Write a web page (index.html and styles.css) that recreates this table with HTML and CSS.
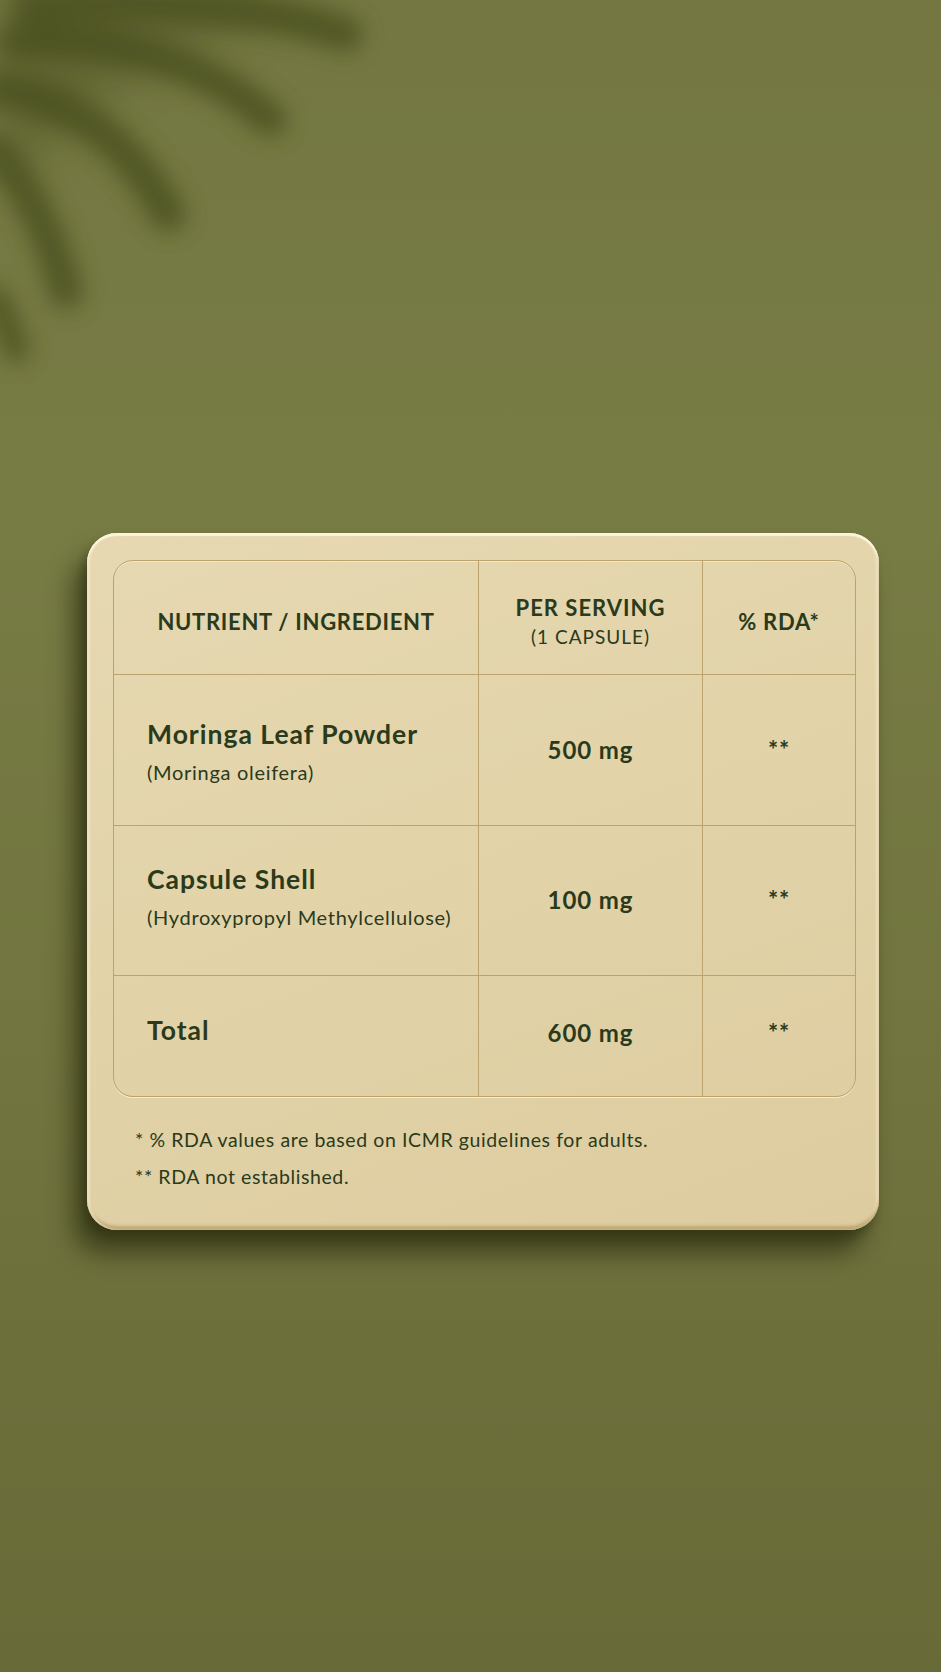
FILE: index.html
```html
<!DOCTYPE html>
<html lang="en">
<head>
<meta charset="utf-8">
<title>Moringa Supplement Facts</title>
<link rel="stylesheet" href="styles.css">
</head>
<body>
<div class="scene">
  <svg class="leaf-shadow" width="600" height="460" viewBox="0 0 600 460" aria-hidden="true">
    <defs>
      <filter id="blur" x="-30%" y="-30%" width="160%" height="160%">
        <feGaussianBlur stdDeviation="11"/>
      </filter>
      <filter id="blurwide" x="-30%" y="-30%" width="160%" height="160%">
        <feGaussianBlur stdDeviation="24"/>
      </filter>
    </defs>
    <g filter="url(#blurwide)" opacity="0.4">
      <path d="M0 0 H300 C220 40 120 60 40 150 C20 170 0 180 0 180 Z" fill="#454b1c"/>
    </g>
    <g filter="url(#blur)" fill="none" stroke="#4a4f1f" stroke-linecap="round" opacity="0.8">
      <path d="M30 6 C140 0 260 4 345 34" stroke-width="36"/>
      <path d="M15 42 C90 36 195 52 270 120" stroke-width="34"/>
      <path d="M-5 88 C60 98 122 130 168 214" stroke-width="36"/>
      <path d="M-5 150 C25 184 50 232 66 292" stroke-width="34"/>
      <path d="M-5 298 C5 318 12 336 16 350" stroke-width="26"/>
    </g>
  </svg>

  <div class="card">
    <div class="facts">
      <div class="cell head">NUTRIENT / INGREDIENT</div>
      <div class="cell head stacked">
        <span class="head-main">PER SERVING</span>
        <span class="head-sub">(1 CAPSULE)</span>
      </div>
      <div class="cell head last-col">% RDA*</div>

      <div class="cell name row-1">
        <span class="name-main">Moringa Leaf Powder</span>
        <span class="name-sub">(Moringa oleifera)</span>
      </div>
      <div class="cell value row-1">500 mg</div>
      <div class="cell value rda row-1 last-col">**</div>

      <div class="cell name row-2">
        <span class="name-main">Capsule Shell</span>
        <span class="name-sub">(Hydroxypropyl Methylcellulose)</span>
      </div>
      <div class="cell value row-2">100 mg</div>
      <div class="cell value rda row-2 last-col">**</div>

      <div class="cell name row-3 last-row">
        <span class="name-main">Total</span>
      </div>
      <div class="cell value row-3 last-row">600 mg</div>
      <div class="cell value rda row-3 last-col last-row">**</div>
    </div>

    <div class="notes">
      <p>* % RDA values are based on ICMR guidelines for adults.</p>
      <p>** RDA not established.</p>
    </div>
  </div>
</div>
</body>
</html>
```

FILE: styles.css
```css
* {
  box-sizing: border-box;
}

html, body {
  margin: 0;
  padding: 0;
}

body {
  width: 941px;
  height: 1672px;
  overflow: hidden;
  font-family: "Lato", "Noto Sans", sans-serif;
  color: #2a3a1b;
  background: linear-gradient(180deg, #747742 0%, #777b44 30%, #72753f 60%, #686a37 100%);
}

.scene {
  position: relative;
  width: 941px;
  height: 1672px;
  padding-top: 533px;
  padding-left: 87px;
}

.leaf-shadow {
  position: absolute;
  left: 0;
  top: 0;
  pointer-events: none;
}

.card {
  position: relative;
  width: 792px;
  height: 697px;
  padding: 27px 23px 0 26px;
  border-radius: 30px;
  background: linear-gradient(160deg, #e6d8b1 0%, #e2d3a9 45%, #ddcc9f 100%);
  box-shadow:
    inset 0 3px 1px rgba(255, 248, 225, 0.85),
    inset 3px 0 2px rgba(255, 248, 225, 0.5),
    inset 0 -4px 3px rgba(160, 130, 70, 0.5),
    inset -3px 0 2px rgba(255, 248, 225, 0.45),
    -14px 24px 24px rgba(35, 37, 10, 0.6),
    -4px 8px 8px rgba(35, 37, 10, 0.35);
}

.facts {
  display: grid;
  grid-template-columns: 365px 224px 1fr;
  grid-template-rows: 114px 151px 150px 120px;
  border: 1.5px solid #bca36c;
  border-radius: 20px;
  overflow: hidden;
  box-shadow: 0 1px 0 rgba(255, 248, 225, 0.7), inset 0 1px 0 rgba(255, 248, 225, 0.5);
}

.cell {
  border-right: 1.5px solid #bca36c;
  border-bottom: 1.5px solid #bca36c;
  display: flex;
  align-items: center;
  justify-content: center;
}

.last-col {
  border-right: none;
}

.last-row {
  border-bottom: none;
}

.head {
  font-weight: 700;
  font-size: 22px;
  line-height: 24px;
  letter-spacing: 0.7px;
  padding-top: 8px;
  text-align: center;
}

.stacked {
  flex-direction: column;
}

.head-main {
  font-size: 22px;
  line-height: 29px;
  letter-spacing: 1px;
}

.head-sub {
  font-size: 19px;
  font-weight: 400;
  line-height: 29px;
  letter-spacing: 1px;
}

.name {
  flex-direction: column;
  align-items: flex-start;
  padding-left: 33px;
}

.name-main {
  font-size: 26.5px;
  font-weight: 700;
  line-height: 36px;
  letter-spacing: 1px;
}

.name-sub {
  font-size: 20px;
  line-height: 30px;
  margin-top: 5px;
  letter-spacing: 0.7px;
}

.value {
  font-size: 24px;
  font-weight: 700;
  line-height: 30px;
  letter-spacing: 0.9px;
}

.row-1.name {
  padding-top: 3px;
}

.row-2.name {
  padding-bottom: 8px;
}

.row-2.value {
  padding-bottom: 1px;
}

.row-3.name {
  padding-bottom: 12px;
}

.row-3.value {
  padding-bottom: 6px;
}

.notes {
  margin-top: 24px;
  padding-left: 22px;
}

.notes p {
  margin: 0;
  font-size: 19.5px;
  line-height: 37px;
  letter-spacing: 0.6px;
}
```
